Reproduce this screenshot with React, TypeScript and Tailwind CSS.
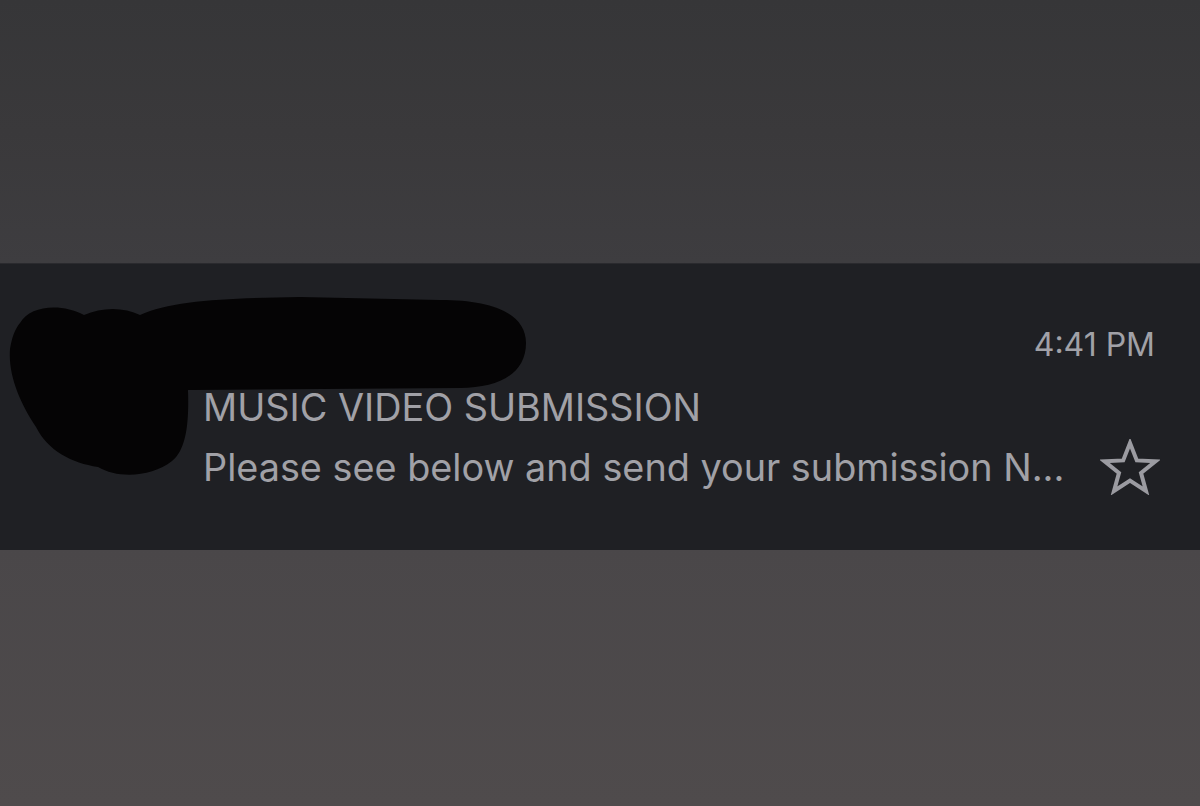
import React from "react";

function Star() {
  return (
    <svg width="60" height="56" viewBox="0 0 60 56" fill="none" aria-hidden="true">
      <path
        d="M30 4 L36.8 21.4 L55.5 22.2 L41 33.9 L46 52 L30 41.6 L14 52 L19 33.9 L4.5 22.2 L23.2 21.4 Z"
        stroke="#9b9ba1"
        strokeWidth="4"
        strokeLinejoin="miter"
      />
    </svg>
  );
}

function Redaction() {
  return (
    <svg
      className="absolute left-0 top-0"
      width="540"
      height="230"
      viewBox="0 263 540 230"
      aria-hidden="true"
    >
      <path
        fill="#050405"
        d="M20 322 C30 304 62 302 84 314 C102 306 124 306 140 314 C172 299 230 297 300 296 L440 299 C492 299 526 312 526 342 C526 372 500 387 460 387 L188 389 C189 420 187 448 172 460 C152 476 118 478 98 466 C72 462 48 450 36 426 C20 402 8 374 10 348 C12 336 15 328 20 322 Z"
      />
    </svg>
  );
}

export default function App() {
  return (
    <div
      className="flex h-[806px] w-full flex-col overflow-hidden"
      style={{ fontFamily: "Inter, 'Liberation Sans', Arial, sans-serif" }}
    >
      <div className="h-[263px] w-full bg-linear-to-b from-[#363638] via-[#3a393b] to-[#3e3d40]" />
      <div className="relative h-[287px] w-full border-t border-[#2a2a2e] bg-[#1f2024] pl-[203px] pr-[45px]">
        <div className="flex h-[101px] items-end justify-end text-[32px] leading-[40px] text-[#a1a1a7]">
          4:41 PM
        </div>
        <div className="mt-[20px] text-[37.8px] leading-[44px] text-[#a1a1a7]">
          MUSIC VIDEO SUBMISSION
        </div>
        <div className="mt-[10px] flex items-center justify-between text-[37.8px] leading-[44px] text-[#a1a1a7]">
          <span>Please see below and send your submission N...</span>
          <span className="-mr-[5px]">
            <Star />
          </span>
        </div>
        <Redaction />
      </div>
      <div className="w-full flex-1 bg-linear-to-b from-[#4a4749] to-[#4f4b4c]" />
    </div>
  );
}
